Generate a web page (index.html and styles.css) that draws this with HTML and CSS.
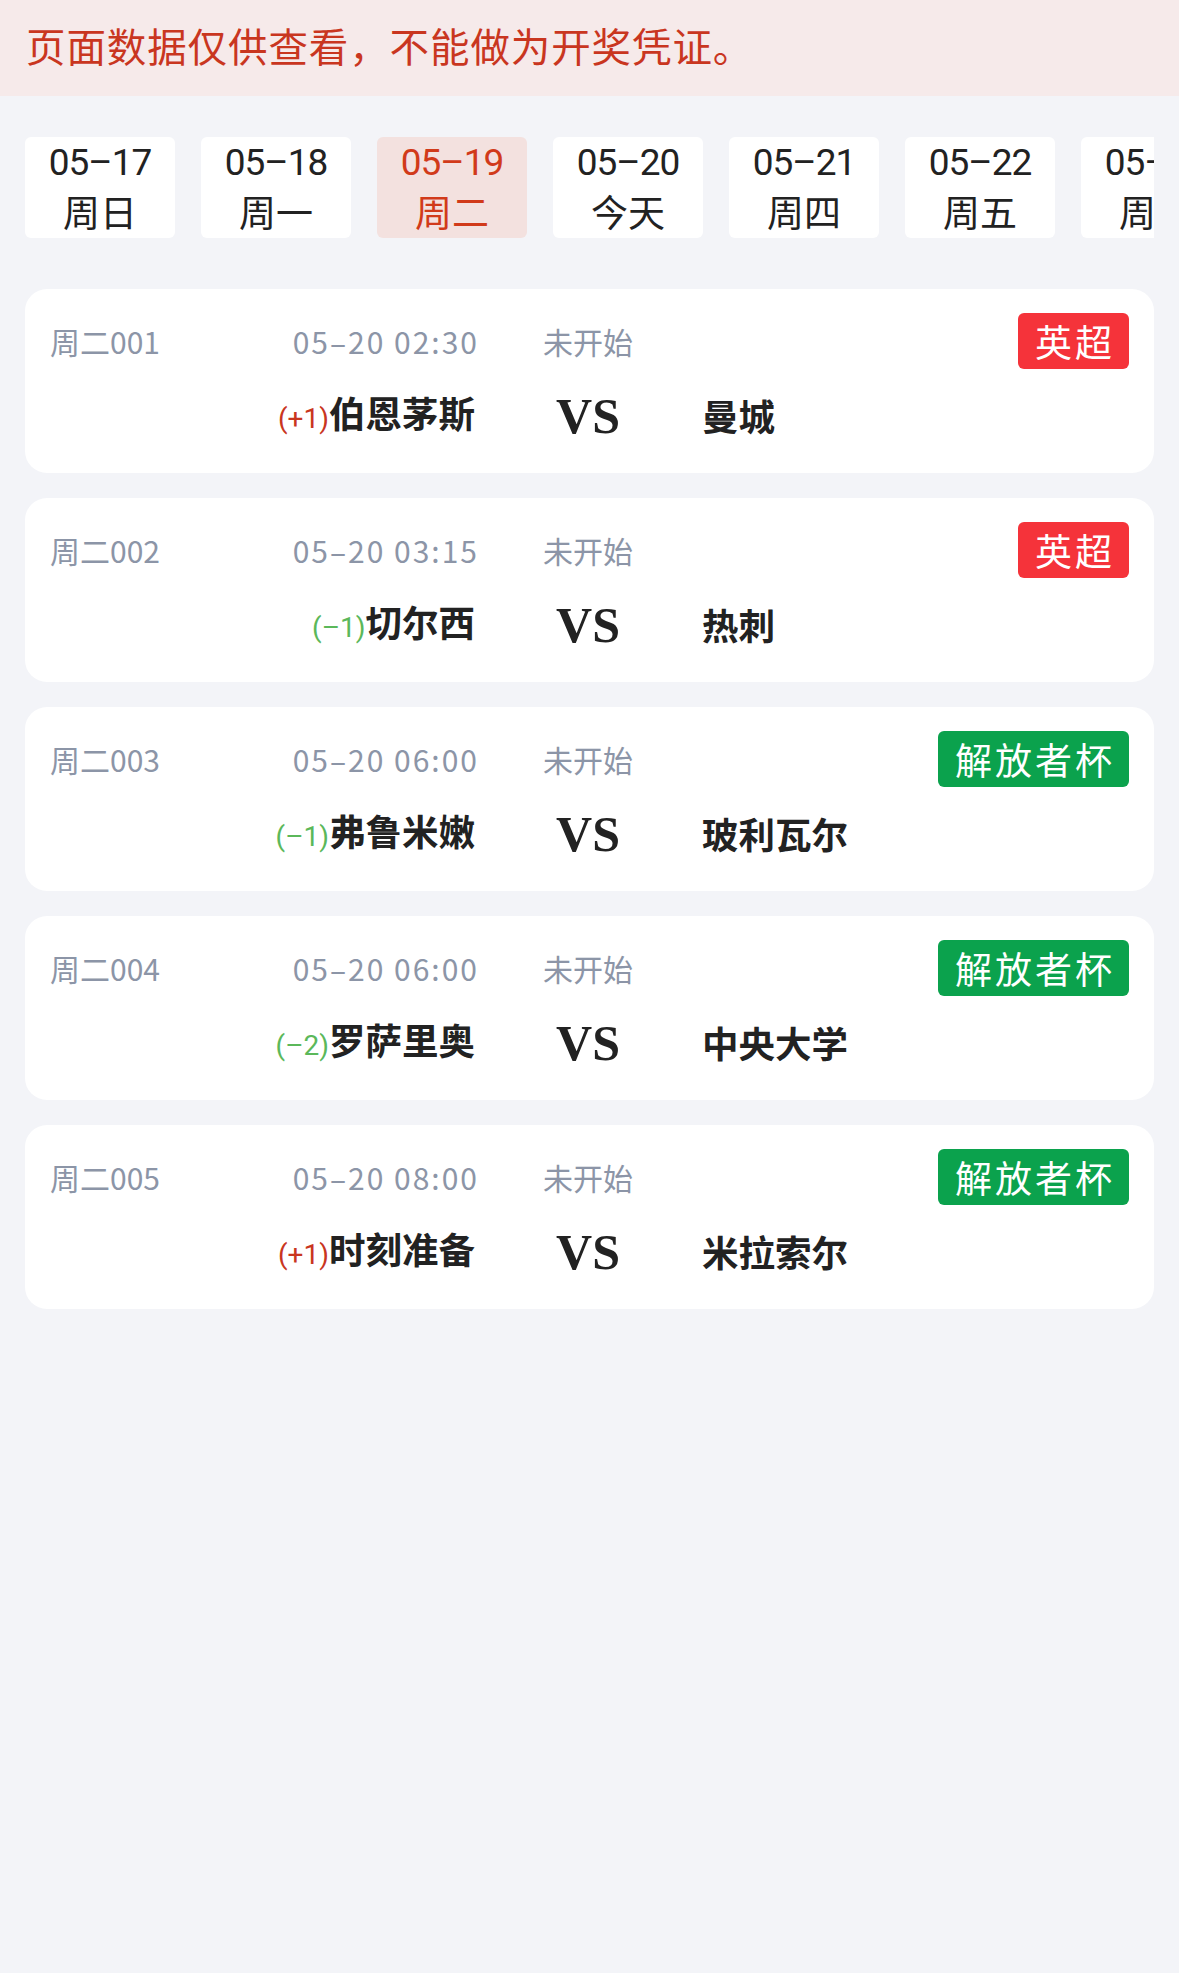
FILE: index.html
```html
<!DOCTYPE html>
<html lang="zh-CN">

<head>
    <meta charset="UTF-8">
    <title>赛事列表</title>
    <link rel="stylesheet" href="styles.css">
</head>

<body>
    <!--提示-->
    <div class="notice">页面数据仅供查看，不能做为开奖凭证。</div>

    <!--日期选择-->
    <div class="dates">
        <ul>
            <li><p>05–17</p><p>周日</p></li>
            <li><p>05–18</p><p>周一</p></li>
            <li class="current"><p>05–19</p><p>周二</p></li>
            <li><p>05–20</p><p>今天</p></li>
            <li><p>05–21</p><p>周四</p></li>
            <li><p>05–22</p><p>周五</p></li>
            <li><p>05–23</p><p>周六</p></li>
        </ul>
    </div>

    <!--比赛列表-->
    <div class="list">
        <div class="match">
            <div class="info">
                <div class="left"><span>周二001</span><span class="time">05–20 02:30</span></div>
                <div class="state">未开始</div>
                <div class="league"><span class="tag red">英超</span></div>
            </div>
            <div class="teams">
                <div class="home"><span class="hc up">(+1)</span>伯恩茅斯</div>
                <div class="vs">VS</div>
                <div class="away">曼城</div>
            </div>
        </div>
        <div class="match">
            <div class="info">
                <div class="left"><span>周二002</span><span class="time">05–20 03:15</span></div>
                <div class="state">未开始</div>
                <div class="league"><span class="tag red">英超</span></div>
            </div>
            <div class="teams">
                <div class="home"><span class="hc down">(–1)</span>切尔西</div>
                <div class="vs">VS</div>
                <div class="away">热刺</div>
            </div>
        </div>
        <div class="match">
            <div class="info">
                <div class="left"><span>周二003</span><span class="time">05–20 06:00</span></div>
                <div class="state">未开始</div>
                <div class="league"><span class="tag green">解放者杯</span></div>
            </div>
            <div class="teams">
                <div class="home"><span class="hc down">(–1)</span>弗鲁米嫩</div>
                <div class="vs">VS</div>
                <div class="away">玻利瓦尔</div>
            </div>
        </div>
        <div class="match">
            <div class="info">
                <div class="left"><span>周二004</span><span class="time">05–20 06:00</span></div>
                <div class="state">未开始</div>
                <div class="league"><span class="tag green">解放者杯</span></div>
            </div>
            <div class="teams">
                <div class="home"><span class="hc down">(–2)</span>罗萨里奥</div>
                <div class="vs">VS</div>
                <div class="away">中央大学</div>
            </div>
        </div>
        <div class="match">
            <div class="info">
                <div class="left"><span>周二005</span><span class="time">05–20 08:00</span></div>
                <div class="state">未开始</div>
                <div class="league"><span class="tag green">解放者杯</span></div>
            </div>
            <div class="teams">
                <div class="home"><span class="hc up">(+1)</span>时刻准备</div>
                <div class="vs">VS</div>
                <div class="away">米拉索尔</div>
            </div>
        </div>
    </div>
</body>

</html>
```

FILE: styles.css
```css
* {
    margin: 0;
    padding: 0
}

body {
    background-color: #f3f4f8;
    font-family: Roboto, "Noto Sans CJK SC", sans-serif;
    min-height: 1973px;
}

.notice {
    height: 96px;
    line-height: 90px;
    padding-left: 26px;
    background-color: #f6eaea;
    color: #c9361f;
    font-size: 39.5px;
    letter-spacing: 0.9px;
    font-family: "Noto Sans CJK SC", sans-serif;
}

.dates {
    margin: 41px 25px 0;
    overflow: hidden;
}

.dates ul {
    display: flex;
    gap: 26px;
    list-style: none;
}

.dates li {
    flex: none;
    width: 150px;
    height: 101px;
    background-color: #fff;
    border-radius: 6px;
    text-align: center;
    font-size: 37px;
    line-height: 52px;
    color: #222;
}

.dates li p:first-child {
    letter-spacing: -1px;
}

.dates .current {
    background-color: #f3e1df;
    color: #d13a1a;
}

.list {
    padding: 51px 25px 0;
    display: flex;
    flex-direction: column;
    gap: 25px;
}

.match {
    background-color: #fff;
    border-radius: 22px;
    padding: 24px 25px 30px;
    height: 184px;
    box-sizing: border-box;
}

.info,
.teams {
    display: grid;
    grid-template-columns: 428px 220px 1fr;
    align-items: center;
}

.info {
    height: 56px;
    color: #8c95a7;
    font-size: 30px;
    font-family: "Noto Sans CJK SC", sans-serif;
}

.info .left {
    display: flex;
    justify-content: space-between;
}

.info .time {
    letter-spacing: 2px;
    margin-right: -1px;
}

.state {
    text-align: center;
}

.league {
    text-align: right;
}

.tag {
    display: inline-block;
    height: 56px;
    line-height: 56px;
    padding: 0 14px 0 17px;
    border-radius: 6px;
    color: #fff;
    font-size: 37px;
    letter-spacing: 3px;
}

.red {
    background-color: #f5333a;
}

.green {
    background-color: #0ba24d;
}

.teams {
    margin-top: 14px;
    height: 60px;
    line-height: 60px;
    color: #222;
    font-size: 36.5px;
    font-weight: bold;
    font-family: "Noto Sans CJK SC", sans-serif;
}

.home {
    text-align: right;
    padding-right: 3px;
}

.hc {
    font-size: 28px;
    font-weight: normal;
    font-family: Roboto, "Noto Sans CJK SC", sans-serif;
}

.up {
    color: #c9361f;
}

.down {
    color: #5bb85a;
}

.vs {
    text-align: center;
    font-family: "Liberation Serif", serif;
    font-size: 50px;
}

.away {
    padding-left: 4px;
}
```
